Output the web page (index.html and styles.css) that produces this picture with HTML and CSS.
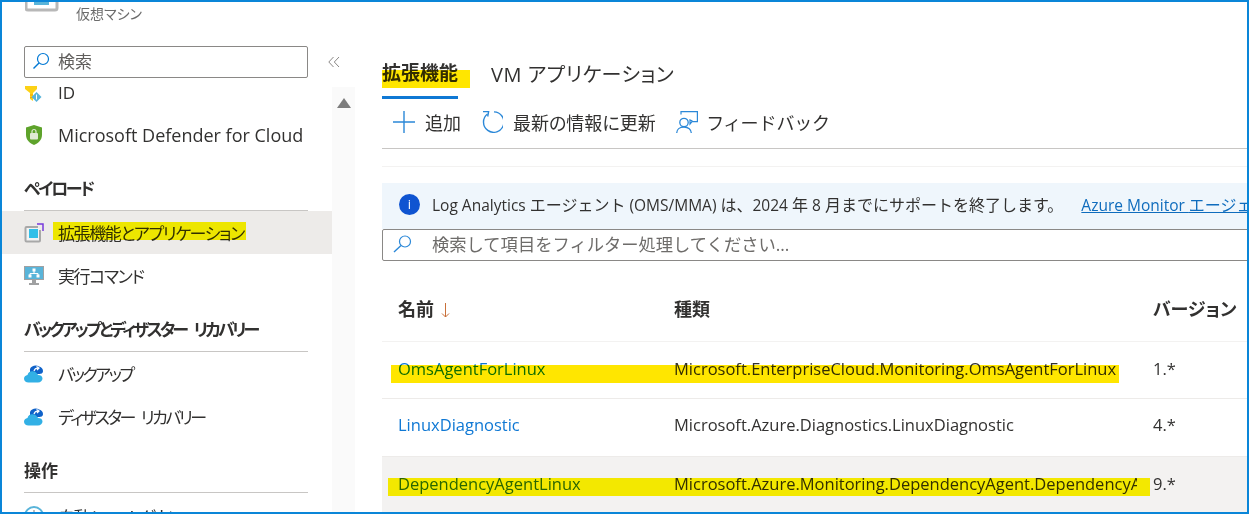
FILE: index.html
```html
<!DOCTYPE html>
<html>
  <head>
    <meta charset="UTF-8">
    <title>拡張機能とアプリケーション</title>
    <link rel="stylesheet" href="styles.css">
  </head>
  <body>
    <div class="frame">
      <aside class="sidebar">
        <div class="resource">
          <svg class="resource-icon" width="34" height="11" viewBox="0 0 34 11"><rect x="1" y="-12" width="31" height="20" rx="2" fill="#fff" stroke="#b8b8b8" stroke-width="3"/><rect x="9" y="-6" width="15" height="9" fill="#59b4d9"/></svg>
          <span class="resource-type">仮想マシン</span>
        </div>
        <div class="search-row">
          <div class="side-search">
            <svg width="18" height="18" viewBox="0 0 18 18"><circle cx="11" cy="7" r="5.5" fill="none" stroke="#0078d4" stroke-width="1.2"/><path d="M7 11 1.5 16.5" stroke="#0078d4" stroke-width="1.4"/></svg>
            <span>検索</span>
          </div>
          <svg class="collapse" width="12" height="12" viewBox="0 0 12 12"><path d="M5.500 1 .8 6l4.700 5M11 1 6.300 6l4.700 5" fill="none" stroke="#8a8886"/></svg>
        </div>
        <div class="side-scroll">
          <div class="scroll-track"><span class="scroll-up"></span></div>
          <ul class="menu">
            <li class="menu-item menu-first">
              <svg width="20" height="20" viewBox="0 0 20 20"><path d="M1 1h12v3L9 8v8L6 14V8L1 4z" fill="#fcd116"/><path d="M6 10h3M6 12.500h3" stroke="#f7a800"/><path d="M12.500 7l5 5-5 5-5-5z" fill="#59b4d9"/><path d="M12.500 9.500v5" stroke="#fff"/></svg>
              <span>ID</span>
            </li>
            <li class="menu-item menu-latin">
              <svg width="20" height="22" viewBox="0 0 20 22"><path d="M10 1 18 3.500V11c0 5-4 8.500-8 10-4-1.500-8-5-8-10V3.500z" fill="#5ea32b"/><rect x="6" y="9" width="8" height="6.500" rx="1" fill="#dfe9d4"/><path d="M8 9V7.500a2 2 0 0 1 4 0V9" fill="none" stroke="#dfe9d4" stroke-width="1.200"/></svg>
              <span>Microsoft Defender for Cloud</span>
            </li>
            <li class="menu-head menu-head-first">ペイロード</li>
            <li class="menu-item selected">
              <svg width="20" height="20" viewBox="0 0 20 20"><path d="M14 4H2.500a1 1 0 0 0-1 1v12.500a1 1 0 0 0 1 1H15a1 1 0 0 0 1-1V7" fill="#f3f3f3" stroke="#a8a8a8" stroke-width="2"/><rect x="5" y="6" width="9" height="9" fill="#32bfe8"/><path d="M13 1h6v7" fill="none" stroke="#773adc" stroke-width="1.500"/></svg>
              <span class="menu-label">拡張機能とアプリケーション<i class="marker marker-side"></i></span>
            </li>
            <li class="menu-item">
              <svg width="20" height="20" viewBox="0 0 20 20"><rect x=".5" y=".5" width="19" height="13" fill="#59b4d9" stroke="#a0a1a2"/><path d="M10 3v4M6 10V7.500h8V10" fill="none" stroke="#fff"/><rect x="8.500" y="2.500" width="3" height="3" fill="#fff"/><rect x="4.500" y="8.500" width="3" height="3" fill="#fff"/><rect x="12.500" y="8.500" width="3" height="3" fill="#fff"/><path d="M8 14h4v3H8zM5 17h10v2H5z" fill="#a0a1a2"/></svg>
              <span>実行コマンド</span>
            </li>
            <li class="menu-head">バックアップとディザスター リカバリー</li>
            <li class="menu-item menu-kana">
              <svg width="20" height="20" viewBox="0 0 20 20"><path d="M6 5c1-3 6-4.500 9-2.500 2 .5 4 2 4 4.500 0 3-3 3-5 3H6z" fill="#0f62c9"/><path d="M4.500 18.500C2 18.500 0 17 0 14.700c0-2 1.500-3.500 3.500-3.700C4 8 7 6.500 10 7.500c2 .5 3.500 2 4 3.500 2.500 0 4.500 1 4.500 3.500 0 2.300-2 4-4.500 4z" fill="#32b0e5"/><path d="M10 7c.5-2 2-3 4-3M12.500 2.500 15 4l-2 2" fill="none" stroke="#fff" stroke-width="1.200"/></svg>
              <span>バックアップ</span>
            </li>
            <li class="menu-item menu-kana">
              <svg width="20" height="20" viewBox="0 0 20 20"><path d="M6 5c1-3 6-4.500 9-2.500 2 .5 4 2 4 4.500 0 3-3 3-5 3H6z" fill="#0f62c9"/><path d="M4.500 18.500C2 18.500 0 17 0 14.700c0-2 1.500-3.500 3.500-3.700C4 8 7 6.500 10 7.500c2 .5 3.500 2 4 3.500 2.500 0 4.500 1 4.500 3.500 0 2.300-2 4-4.500 4z" fill="#32b0e5"/><path d="M10 7c.5-2 2-3 4-3M12.500 2.500 15 4l-2 2" fill="none" stroke="#fff" stroke-width="1.200"/></svg>
              <span>ディザスター リカバリー</span>
            </li>
            <li class="menu-head menu-head-kanji">操作</li>
            <li class="menu-item menu-last">
              <svg width="20" height="20" viewBox="0 0 20 20"><circle cx="10" cy="10" r="9" fill="#fff" stroke="#59b4d9" stroke-width="2"/><path d="M10 4v6h4" fill="none" stroke="#7a7a7a"/></svg>
              <span>自動シャットダウン</span>
            </li>
          </ul>
        </div>
      </aside>

      <main class="content">
        <div class="tabs">
          <div class="tab tab-active">拡張機能<i class="marker marker-tab"></i></div>
          <div class="tab tab-vm">VM アプリケーション</div>
        </div>
        <div class="toolbar">
          <div class="tool">
            <svg width="22" height="22" viewBox="0 0 22 22"><path d="M11 0v22M0 11h22" stroke="#2b88d8" stroke-width="1.400"/></svg>
            <span>追加</span>
          </div>
          <div class="tool">
            <svg width="22" height="22" viewBox="0 0 22 22"><path d="M6.500 3A10.200 10.200 0 1 0 13 .9" fill="none" stroke="#2b88d8" stroke-width="1.400"/><path d="M2 .6h5.600L6.700 5.500" fill="none" stroke="#2b88d8" stroke-width="1.400"/></svg>
            <span>最新の情報に更新</span>
          </div>
          <div class="tool tool-wide">
            <svg width="22" height="22" viewBox="0 0 22 22"><path d="M5 3.500V.6h16.400v10H16l-2 2.400v-4l2.500 1" fill="none" stroke="#2b88d8" stroke-width="1.200"/><circle cx="8" cy="11.500" r="4.200" fill="#fff" stroke="#2b88d8" stroke-width="1.300"/><path d="M.7 22c0-3.500 3-6 7.300-6s7.300 2.500 7.300 6" fill="none" stroke="#2b88d8" stroke-width="1.300"/></svg>
            <span>フィードバック</span>
          </div>
        </div>
        <div class="info-bar">
          <span class="info-icon">i</span>
          <span class="info-text">Log Analytics <span class="ja">エージェント</span> (OMS/MMA) <span class="ja">は、</span>2024 <span class="ja">年</span> 8 <span class="ja">月までにサポートを終了します。</span></span>
          <a class="info-link">Azure Monitor <span class="ja">エージェントへの移行</span></a>
        </div>
        <div class="filter">
          <svg width="20" height="18" viewBox="0 0 20 18"><circle cx="13" cy="6.500" r="5.500" fill="none" stroke="#2b88d8" stroke-width="1.200"/><path d="M9 10.500 2 17" stroke="#2b88d8" stroke-width="1.400"/></svg>
          <span>検索して項目をフィルター処理してください...</span>
        </div>
        <div class="table">
          <div class="row row-head">
            <div class="cell">名前 <svg class="sort" width="9" height="15" viewBox="0 0 9 15"><path d="M4.500 0v14M1 10.500l3.500 3.500L8 10.500" fill="none" stroke="#c9703a"/></svg></div>
            <div class="cell">種類</div>
            <div class="cell">バージョン</div>
          </div>
          <div class="row row-one">
            <div class="cell"><a class="link">OmsAgentForLinux</a></div>
            <div class="cell">Microsoft.EnterpriseCloud.Monitoring.OmsAgentForLinux</div>
            <div class="cell">1.*</div>
            <i class="marker marker-row-one"></i>
          </div>
          <div class="row row-two">
            <div class="cell"><a class="link">LinuxDiagnostic</a></div>
            <div class="cell">Microsoft.Azure.Diagnostics.LinuxDiagnostic</div>
            <div class="cell">4.*</div>
          </div>
          <div class="row row-three">
            <div class="cell"><a class="link">DependencyAgentLinux</a></div>
            <div class="cell">Microsoft.Azure.Monitoring.DependencyAgent.DependencyAgentLinux</div>
            <div class="cell">9.*</div>
            <i class="marker marker-row-three"></i>
          </div>
        </div>
      </main>
    </div>
  </body>
</html>
```
FILE: styles.css
```css
html, body {
  margin: 0;
  padding: 0;
  height: 100%;
}

body {
  font-family: "Open Sans", "Noto Sans CJK JP", sans-serif;
  font-feature-settings: "palt";
  color: #323130;
  background-color: #fff;
  overflow: hidden;
}

.frame {
  box-sizing: border-box;
  width: 1249px;
  height: 514px;
  border: 2px solid #0a86d8;
  display: flex;
  overflow: hidden;
  position: relative;
}

/* left menu */
.sidebar {
  width: 353px;
  flex: none;
  display: flex;
  flex-direction: column;
  height: 510px;
}

.resource {
  height: 44px;
  padding-left: 23px;
  display: flex;
  flex: none;
  align-items: flex-start;
}

.resource-icon {
  display: block;
}

.resource-type {
  margin-left: 17px;
  margin-top: 2px;
  font-size: 14px;
  line-height: 20px;
  color: #6b6b6b;
}

.search-row {
  display: flex;
  align-items: center;
  height: 32px;
  padding-left: 22px;
  flex: none;
}

.side-search {
  box-sizing: border-box;
  width: 284px;
  height: 32px;
  border: 1px solid #8a8886;
  border-radius: 2px;
  display: flex;
  align-items: center;
  padding: 0 0 3px 7px;
  font-size: 17px;
  color: #605e5c;
}

.side-search span {
  margin-left: 8px;
}

.collapse {
  margin-left: 20px;
}

.side-scroll {
  flex: 1;
  position: relative;
  overflow: hidden;
}

.scroll-track {
  position: absolute;
  top: 9px;
  left: 330px;
  bottom: 0;
  width: 23px;
  background-color: #fafafa;
}

.scroll-up {
  display: block;
  width: 0;
  margin: 11px 0 0 5px;
  border-left: 7px solid transparent;
  border-right: 7px solid transparent;
  border-bottom: 10px solid #7d7d7d;
}

.menu {
  list-style: none;
  margin: -7px 0 0 0;
  padding: 0;
  width: 330px;
  position: relative;
}

.menu-item {
  height: 43px;
  display: flex;
  align-items: center;
  padding-left: 22px;
  font-size: 17px;
  letter-spacing: -1.400px;
}

.menu-first {
  height: 42px;
  letter-spacing: 0;
}

.menu-first svg {
  margin-top: 5px;
}

.menu-latin {
  height: 44px;
  font-size: 18px;
  letter-spacing: 0;
}

.menu-kana {
  letter-spacing: -2.500px;
  word-spacing: 5px;
}

.menu-last {
  height: 46px;
}

.menu-item svg {
  flex: none;
  margin-right: 14px;
}

.menu-head {
  box-sizing: border-box;
  margin: 11px 24px 0 22px;
  height: 44px;
  padding-top: 11px;
  line-height: 22px;
  font-size: 17px;
  letter-spacing: -2.900px;
  word-spacing: 6px;
  font-weight: 700;
  border-bottom: 1px solid #c8c6c4;
}

.menu-head-first {
  margin-top: 10px;
  letter-spacing: -2.400px;
}

.menu-head-kanji {
  letter-spacing: 0;
}

.selected {
  background-color: #edebe9;
}

.menu-label {
  position: relative;
}

/* yellow pen strokes over the screenshot */
.marker {
  position: absolute;
  display: block;
  mix-blend-mode: multiply;
  background-color: #ffe600;
}

.marker-side {
  left: -5px;
  right: -2px;
  top: 2px;
  height: 18px;
  background-color: #fffa00;
}

/* right side */
.content {
  flex: 1;
  min-width: 0;
  margin-left: 27px;
  overflow: hidden;
  display: flex;
  flex-direction: column;
}

.tabs {
  display: flex;
  height: 54px;
  margin-top: 42px;
  box-sizing: border-box;
  align-items: flex-start;
  flex: none;
}

.tab {
  position: relative;
  font-size: 19px;
  line-height: 25px;
  padding: 18px 0 0 0;
  height: 34px;
  margin-right: 33px;
}

.tab-vm {
  font-size: 20px;
  letter-spacing: .5px;
}

.tab-active {
  font-weight: 700;
  width: 76px;
  margin-top: -1px;
  height: 35px;
  border-bottom: 3px solid #0f78d4;
}

.marker-tab {
  left: 0;
  top: 27px;
  width: 88px;
  height: 18px;
}

.toolbar {
  display: flex;
  align-items: center;
  box-sizing: border-box;
  height: 51px;
  padding-left: 11px;
  padding-bottom: 3px;
  border-bottom: 1px solid #c8c6c4;
  flex: none;
}

.tool {
  display: flex;
  align-items: center;
  font-size: 18px;
  margin-right: 20px;
}

.tool-wide span {
  letter-spacing: 2.200px;
}

.tool svg {
  margin-right: 10px;
}

.info-bar {
  margin-top: 17px;
  border-top: 1px solid #f3f2f1;
  height: 46px;
  display: flex;
  align-items: center;
  white-space: nowrap;
  background: linear-gradient(#fff 16px, #eff6fc 16px);
  padding: 14px 0 2px 0;
  font-size: 15.500px;
  flex: none;
}

.ja {
  font-size: 16px;
  font-feature-settings: normal;
}

.info-icon {
  width: 21px;
  height: 21px;
  border-radius: 50%;
  margin-left: 17px;
  margin-right: 12px;
  background-color: #0f54d1;
  color: #fff;
  font-size: 13px;
  text-align: center;
  line-height: 21px;
  flex: none;
}

.info-link {
  margin-left: 18px;
  color: #0f6cbd;
  text-decoration: underline;
}

.filter {
  box-sizing: border-box;
  height: 32px;
  margin-right: -4px;
  border: 1px solid #8a8886;
  border-radius: 2px;
  display: flex;
  align-items: center;
  padding: 0 0 3px 9px;
  font-size: 17.300px;
  font-feature-settings: normal;
  color: #6e6c6a;
  flex: none;
}

.filter svg {
  margin-right: 20px;
}

.table {
  margin-top: 20px;
}

.row {
  display: grid;
  grid-template-columns: 276px 463px 1fr;
  padding-left: 16px;
  align-items: center;
  height: 57px;
  font-size: 16.500px;
  border-bottom: 1px solid #edebe9;
  position: relative;
  box-sizing: border-box;
}

.row .cell:nth-child(3) {
  margin-left: 16px;
}

.row-head {
  height: 61px;
  padding-bottom: 6px;
  font-size: 18px;
  font-weight: 700;
  border-bottom: 1px solid #f3f2f1;
}

.cell {
  white-space: nowrap;
  overflow: hidden;
}

.sort {
  margin-left: 2px;
  vertical-align: -2px;
}

.link {
  color: #0f78d4;
}

.row-one {
  padding-bottom: 3px;
}

.row-two {
  height: 58px;
  padding-bottom: 7px;
}

.row-three {
  background-color: #f3f2f1;
  height: 58px;
  padding-bottom: 4px;
}

.row-three .link {
  color: #2a6a70;
}

.marker-row-one {
  left: 9px;
  top: 23px;
  width: 728px;
  height: 18px;
}

.marker-row-three {
  left: 6px;
  top: 21px;
  width: 762px;
  height: 18px;
  background-color: #fff500;
}
```
